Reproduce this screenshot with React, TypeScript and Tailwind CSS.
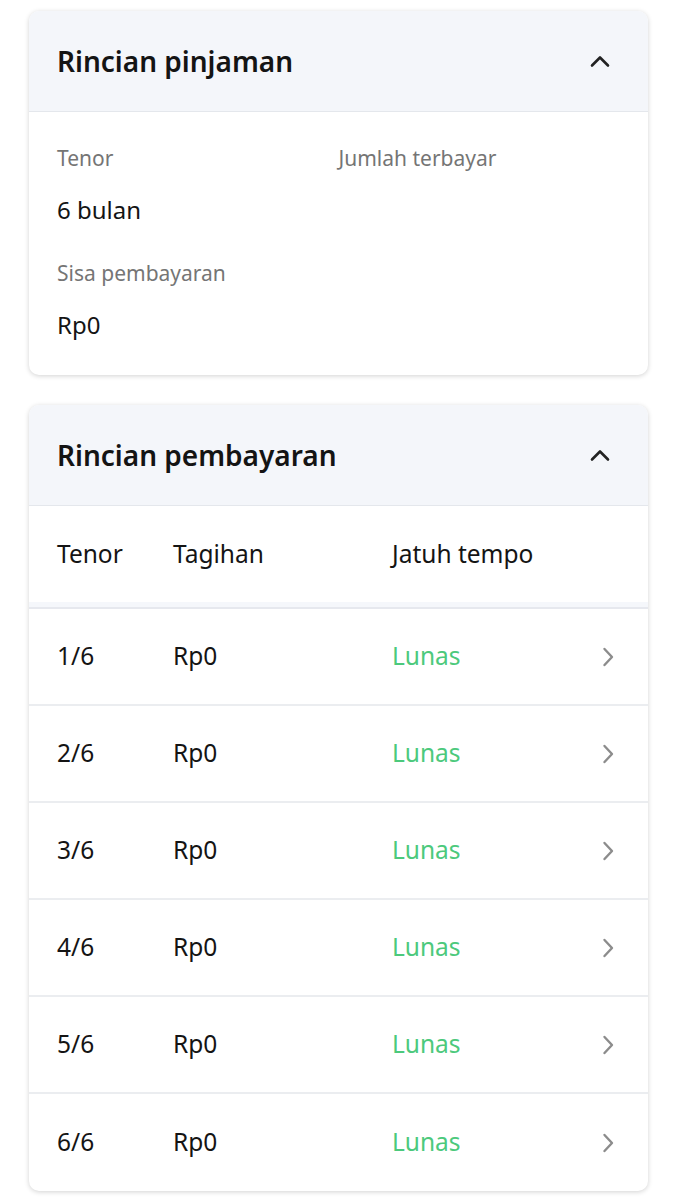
import React from "react";

const font = { fontFamily: '"Noto Sans", "Open Sans", sans-serif' };

function ChevronUp() {
  return (
    <svg width="22" height="14" viewBox="0 0 22 14" fill="none">
      <path d="M3 11.5 L11 3.5 L19 11.5" stroke="#222" strokeWidth="2.6" strokeLinecap="round" strokeLinejoin="round" />
    </svg>
  );
}

function ChevronRight() {
  return (
    <svg width="14" height="22" viewBox="0 0 14 22" fill="none">
      <path d="M3.5 3 L11 11 L3.5 19" stroke="#8c8c8c" strokeWidth="2.4" strokeLinecap="round" strokeLinejoin="round" />
    </svg>
  );
}

function Header({ title }: { title: string }) {
  return (
    <div className="flex h-[101px] items-center justify-between border-b border-[#e4e7ec] bg-[#f4f6fa] pl-[28px] pr-[37px]">
      <span className="text-[28px] font-semibold leading-[36px] text-[#141414]">{title}</span>
      <ChevronUp />
    </div>
  );
}

export default function App() {
  const rows = ["1/6", "2/6", "3/6", "4/6", "5/6", "6/6"];
  return (
    <div className="min-h-[1200px] bg-white pt-[11px]" style={font}>
      <div className="mx-[29px] w-[619px] overflow-hidden rounded-[10px] bg-white shadow-[0_1px_5px_rgba(0,0,0,0.18)]">
        <Header title="Rincian pinjaman" />
        <div className="grid grid-cols-2 px-[28px] pb-[34px] pt-[33px]">
          <div>
            <div className="text-[21px] leading-[26px] text-[#757575]">Tenor</div>
            <div className="mt-[23px] text-[24px] leading-[32px] text-[#141414]">6 bulan</div>
          </div>
          <div>
            <div className="text-[21px] leading-[26px] text-[#757575]">Jumlah terbayar</div>
          </div>
          <div className="mt-[34px]">
            <div className="text-[21px] leading-[26px] text-[#757575]">Sisa pembayaran</div>
            <div className="mt-[23px] text-[24px] leading-[32px] text-[#141414]">Rp0</div>
          </div>
        </div>
      </div>

      <div className="mx-[29px] mt-[30px] w-[619px] overflow-hidden rounded-[10px] bg-white shadow-[0_1px_5px_rgba(0,0,0,0.18)]">
        <Header title="Rincian pembayaran" />
        <div className="flex h-[96px] items-center px-[28px] text-[24.5px] text-[#141414]">
          <span className="w-[116px]">Tenor</span>
          <span className="w-[219px]">Tagihan</span>
          <span>Jatuh tempo</span>
        </div>
        <div className="h-[7px] border-b-2 border-[#e6e8ee] bg-[#f5f7fb]" />
        {rows.map((r, i) => (
          <div
            key={r}
            className={`flex h-[97px] items-center pl-[28px] pr-[33px] text-[24.5px] ${i < rows.length - 1 ? "border-b-2 border-[#ebedf0]" : ""}`}
          >
            <span className="w-[116px] text-[#141414]">{r}</span>
            <span className="w-[219px] text-[#141414]">Rp0</span>
            <span className="flex-1 text-[#4cc97c]">Lunas</span>
            <ChevronRight />
          </div>
        ))}
      </div>
    </div>
  );
}
